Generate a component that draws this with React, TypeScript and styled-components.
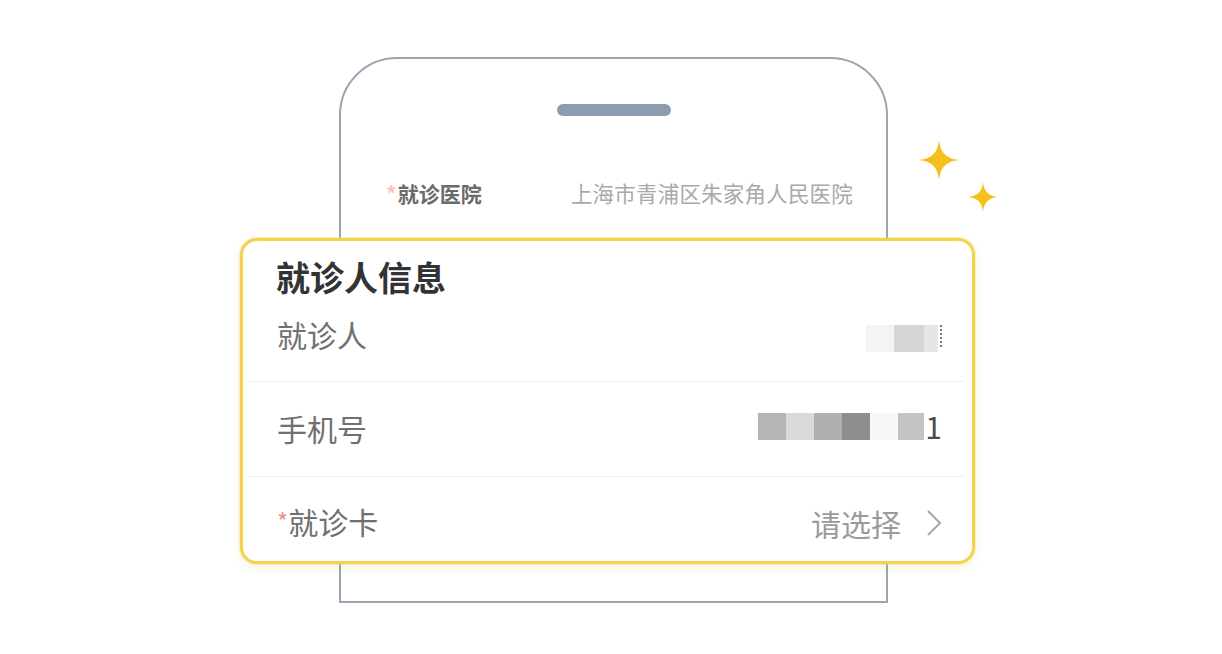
import React from "react";
import styled, { createGlobalStyle } from "styled-components";

const GlobalStyle = createGlobalStyle`
  html, body {
    margin: 0;
    padding: 0;
    background: #ffffff;
  }
  body {
    font-family: "Noto Sans CJK SC", "Noto Sans", sans-serif;
  }
  * { box-sizing: border-box; }
`;

const Page = styled.div`
  width: 1222px;
  height: 654px;
  padding: 57px 0 0 339px;
  background: #ffffff;
  overflow: hidden;
`;

const Phone = styled.div`
  position: relative;
  width: 549px;
  height: 546px;
  border: 2px solid #9ca5b2;
  border-radius: 58px 58px 0 0;
  background: #ffffff;
  display: flex;
  flex-direction: column;
  align-items: center;
`;

const Notch = styled.div`
  margin-top: 45px;
  width: 114px;
  height: 12px;
  border-radius: 6px;
  background: #8e9cb1;
`;

const HospitalRow = styled.div`
  align-self: stretch;
  margin-top: 62px;
  padding: 0 34px 0 45px;
  display: flex;
  justify-content: space-between;
  align-items: center;
  height: 30px;
  font-size: 21px;
  line-height: 30px;
`;

const HospitalLabel = styled.span`
  color: #6a6a6a;
  font-weight: 700;
`;

const HospitalName = styled.span`
  color: #a9a9a9;
  font-size: 21.5px;
  margin-right: -1px;
  letter-spacing: 0.2px;
`;

const Star = styled.span`
  color: #f9c4bc;
  margin-right: 1px;
`;

const Required = styled.span`
  color: #f08a8a;
  font-size: 24px;
  position: relative;
  top: -3px;
`;

const Card = styled.section`
  position: absolute;
  left: -101px;
  top: 179px;
  width: 735px;
  height: 326px;
  border: 3px solid #f2d34e;
  border-radius: 17px;
  background: #ffffff;
  box-shadow: 0 0 0 1px rgba(246, 220, 110, 0.35), 0 3px 10px rgba(200, 170, 40, 0.18);
  display: flex;
  flex-direction: column;
`;

const CardTitle = styled.h2`
  margin: 0;
  padding: 17px 0 0 33px;
  font-size: 34px;
  line-height: 37px;
  font-weight: 700;
  color: #333333;
`;

const Row = styled.div<{ $height: number; $last?: boolean; $top?: number; $bottom?: number }>`
  margin: 0 8px 0 4px;
  padding: ${(p) => p.$top ?? 0}px 22px ${(p) => p.$bottom ?? 0}px 30px;
  height: ${(p) => p.$height}px;
  display: flex;
  align-items: center;
  justify-content: space-between;
  border-bottom: ${(p) => (p.$last ? "none" : "1px solid #efefef")};
  flex-shrink: 0;
`;

const RowLabel = styled.span`
  font-size: 30px;
  color: #707070;
  line-height: 40px;
`;

const RowValue = styled.div<{ $shift?: number }>`
  display: flex;
  align-items: center;
  margin-top: ${(p) => p.$shift ?? 0}px;
`;

const Placeholder = styled.span`
  font-size: 30px;
  color: #9b9b9b;
  line-height: 40px;
  margin-right: 25px;
`;

const Mosaic = styled.div`
  display: flex;
  height: 27px;
`;

const Cell = styled.span<{ $shade: string; $w: number }>`
  display: block;
  width: ${(p) => p.$w}px;
  height: 100%;
  background: ${(p) => p.$shade};
`;

const Digit = styled.span`
  font-size: 30px;
  line-height: 27px;
  color: #4a4a4a;
  margin-left: 1px;
`;

const SmallFrag = styled.span`
  display: block;
  width: 4px;
  height: 22px;
  border-right: 2px dotted #777;
`;

const Sparkle = styled.svg<{ $left: number; $top: number }>`
  position: absolute;
  left: ${(p) => p.$left}px;
  top: ${(p) => p.$top}px;
`;

const StarShape = ({ size, left, top }: { size: number; left: number; top: number }) => (
  <Sparkle $left={left} $top={top} width={size} height={size} viewBox="0 0 40 40">
    <path
      d="M20 0 C21.5 13 27 18.5 40 20 C27 21.5 21.5 27 20 40 C18.5 27 13 21.5 0 20 C13 18.5 18.5 13 20 0 Z"
      fill="#f6c01c"
    />
  </Sparkle>
);

const Chevron = () => (
  <svg width="16" height="28" viewBox="0 0 16 28">
    <polyline points="2,2 14,14 2,26" fill="none" stroke="#a8a8a8" strokeWidth="2" />
  </svg>
);

const phoneCells = [
  { shade: "#b5b5b5", w: 28 },
  { shade: "#dadada", w: 28 },
  { shade: "#b0b0b0", w: 28 },
  { shade: "#8e8e8e", w: 28 },
  { shade: "#f8f8f8", w: 28 },
  { shade: "#c3c3c3", w: 26 },
];

const nameCells = [
  { shade: "#f4f4f4", w: 28 },
  { shade: "#d6d6d6", w: 30 },
  { shade: "#e6e6e6", w: 14 },
];

export default function App() {
  return (
    <>
      <GlobalStyle />
      <Page>
        <Phone>
          <Notch />
          <HospitalRow>
            <HospitalLabel>
              <Star>*</Star>就诊医院
            </HospitalLabel>
            <HospitalName>上海市青浦区朱家角人民医院</HospitalName>
          </HospitalRow>

          <StarShape size={40} left={578} top={81} />
          <StarShape size={30} left={627} top={123} />

          <Card>
            <CardTitle>就诊人信息</CardTitle>
            <Row $height={87} $bottom={8}>
              <RowLabel>就诊人</RowLabel>
              <RowValue $shift={8}>
                <Mosaic>
                  {nameCells.map((c, i) => (
                    <Cell key={i} $shade={c.shade} $w={c.w} />
                  ))}
                  <SmallFrag />
                </Mosaic>
              </RowValue>
            </Row>
            <Row $height={95} $bottom={2}>
              <RowLabel>手机号</RowLabel>
              <RowValue $shift={-4}>
                <Mosaic>
                  {phoneCells.map((c, i) => (
                    <Cell key={i} $shade={c.shade} $w={c.w} />
                  ))}
                </Mosaic>
                <Digit>1</Digit>
              </RowValue>
            </Row>
            <Row $height={83} $last $top={8}>
              <RowLabel>
                <Required>*</Required>就诊卡
              </RowLabel>
              <RowValue>
                <Placeholder>请选择</Placeholder>
                <Chevron />
              </RowValue>
            </Row>
          </Card>
        </Phone>
      </Page>
    </>
  );
}
